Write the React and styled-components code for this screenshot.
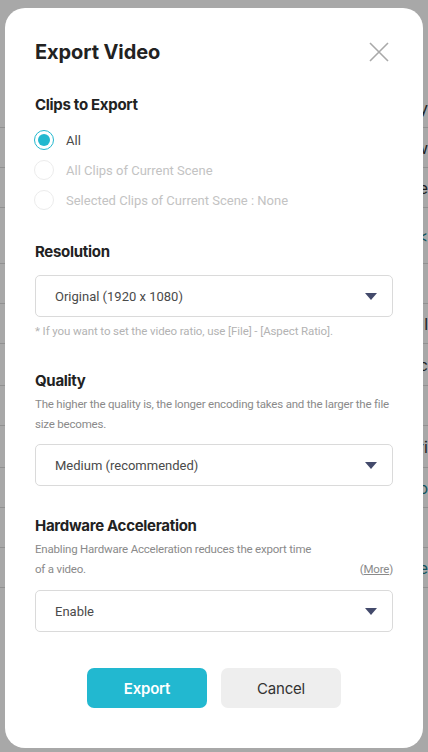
import React, { useState } from "react";
import styled, { createGlobalStyle } from "styled-components";

const GlobalStyle = createGlobalStyle`
  * { box-sizing: border-box; }
  html, body { margin: 0; padding: 0; }
  body {
    font-family: Inter, "Noto Sans", "Liberation Sans", sans-serif;
    background: #ffffff;
  }
`;

const bodyFont = `Roboto, "Noto Sans", "Liberation Sans", sans-serif`;

const backRows = [
  { text: "y", teal: false, h: 40 },
  { text: "w", teal: false, h: 40 },
  { text: "e", teal: false, h: 40 },
  { text: "<", teal: true, h: 56 },
  { text: "", teal: false, h: 40 },
  { text: "l", teal: false, h: 40 },
  { text: "c", teal: false, h: 42 },
  { text: "", teal: false, h: 40 },
  { text: "ri", teal: false, h: 42 },
  { text: "o", teal: true, h: 40 },
  { text: "", teal: false, h: 40 },
  { text: "e", teal: true, h: 40 },
];

function App() {
  const [clips, setClips] = useState("all");

  const clipOptions = [
    { id: "all", label: "All", disabled: false },
    { id: "scene", label: "All Clips of Current Scene", disabled: true },
    { id: "selected", label: "Selected Clips of Current Scene : None", disabled: true },
  ];

  return (
    <Screen>
      <GlobalStyle />
      <BackPage>
        {backRows.map((r, i) => (
          <BackRow key={i} $h={r.h}>
            <BackText $teal={r.teal}>{r.text}</BackText>
          </BackRow>
        ))}
      </BackPage>
      <Backdrop>
        <Modal>
          <Header>
            <Title>Export Video</Title>
            <CloseButton aria-label="Close">
              <svg width="20" height="20" viewBox="0 0 20 20">
                <path d="M1 1 L19 19 M19 1 L1 19" stroke="#a9a9a9" strokeWidth="1.6" fill="none" />
              </svg>
            </CloseButton>
          </Header>

          <Section $top={31}>
            <Label>Clips to Export</Label>
            <RadioList>
              {clipOptions.map((o) => (
                <RadioRow key={o.id} $disabled={o.disabled} onClick={() => !o.disabled && setClips(o.id)}>
                  <RadioCircle $checked={clips === o.id} $disabled={o.disabled} />
                  <RadioText $disabled={o.disabled}>{o.label}</RadioText>
                </RadioRow>
              ))}
            </RadioList>
          </Section>

          <Section $top={27}>
            <Label>Resolution</Label>
            <Select $top={13}>
              <span>Original (1920 x 1080)</span>
              <Arrow />
            </Select>
            <Note>* If you want to set the video ratio, use [File] - [Aspect Ratio].</Note>
          </Section>

          <Section $top={32}>
            <Label>Quality</Label>
            <Desc>The higher the quality is, the longer encoding takes and the larger the file size becomes.</Desc>
            <Select $top={10}>
              <span>Medium (recommended)</span>
              <Arrow />
            </Select>
          </Section>

          <Section $top={30}>
            <Label>Hardware Acceleration</Label>
            <Desc>
              Enabling Hardware Acceleration reduces the export time
              <DescLine>
                <span>of a video.</span>
                <More>
                  (<u>More</u>)
                </More>
              </DescLine>
            </Desc>
            <Select $top={11}>
              <span>Enable</span>
              <Arrow />
            </Select>
          </Section>

          <Buttons>
            <Button $primary>Export</Button>
            <Button>Cancel</Button>
          </Buttons>
        </Modal>
      </Backdrop>
    </Screen>
  );
}

export default App;

const Screen = styled.div`
  position: relative;
  width: 428px;
  height: 752px;
  overflow: hidden;
`;

const BackPage = styled.div`
  display: flex;
  flex-direction: column;
  padding-top: 88px;
`;

const BackRow = styled.div`
  height: ${(p) => p.$h}px;
  display: flex;
  align-items: center;
  justify-content: flex-end;
  border-bottom: 1px solid #dcdcdc;
`;

const BackText = styled.span`
  font-size: 16px;
  color: ${(p) => (p.$teal ? "#1d7f8c" : "#333")};
`;

const Backdrop = styled.div`
  position: absolute;
  inset: 0;
  background: rgba(0, 0, 0, 0.34);
  padding: 8px 5px 4px 5px;
`;

const Modal = styled.div`
  width: 418px;
  height: 740px;
  background: #fff;
  border-radius: 20px;
  padding: 32px 30px 0 30px;
  display: flex;
  flex-direction: column;
`;

const Header = styled.div`
  display: flex;
  align-items: center;
  justify-content: space-between;
  height: 24px;
`;

const Title = styled.h1`
  margin: 0;
  font-size: 20px;
  line-height: 24px;
  font-weight: 700;
  color: #222;
  letter-spacing: -0.1px;
`;

const CloseButton = styled.button`
  border: none;
  background: none;
  padding: 0;
  margin-right: 4px;
  width: 20px;
  height: 20px;
  cursor: pointer;
  display: flex;
`;

const Section = styled.div`
  display: flex;
  flex-direction: column;
  margin-top: ${(p) => p.$top}px;
`;

const Label = styled.div`
  font-size: 15px;
  line-height: 20px;
  font-weight: 700;
  color: #222;
  letter-spacing: -0.3px;
`;

const RadioList = styled.div`
  display: flex;
  flex-direction: column;
  margin-top: 10px;
`;

const RadioRow = styled.div`
  display: flex;
  align-items: center;
  height: 30px;
  cursor: ${(p) => (p.$disabled ? "default" : "pointer")};
`;

const RadioCircle = styled.span`
  width: 20px;
  height: 20px;
  border-radius: 50%;
  border: 1px solid ${(p) => (p.$checked ? "#22b8cf" : "#ececec")};
  display: flex;
  align-items: center;
  justify-content: center;
  margin-left: -1px;
  &::after {
    content: "";
    width: 12px;
    height: 12px;
    border-radius: 50%;
    background: ${(p) => (p.$checked ? "#22b8cf" : "transparent")};
  }
`;

const RadioText = styled.span`
  margin-left: 12px;
  font-family: ${bodyFont};
  font-size: 13px;
  color: ${(p) => (p.$disabled ? "#c3c3c3" : "#4a4a4a")};
`;

const Select = styled.div`
  margin-top: ${(p) => p.$top}px;
  height: 42px;
  border: 1px solid #dadada;
  border-radius: 5px;
  display: flex;
  align-items: center;
  justify-content: space-between;
  padding: 0 15px 0 19px;
  font-family: ${bodyFont};
  font-size: 13px;
  color: #4a4a4a;
`;

const Arrow = styled.span`
  width: 0;
  height: 0;
  border-left: 6px solid transparent;
  border-right: 6px solid transparent;
  border-top: 7px solid #434a6b;
`;

const Note = styled.div`
  margin-top: 6px;
  font-family: ${bodyFont};
  font-size: 11.5px;
  line-height: 16px;
  color: #b3b3b3;
  letter-spacing: -0.1px;
`;

const Desc = styled.div`
  margin-top: 3px;
  font-family: ${bodyFont};
  font-size: 11.5px;
  line-height: 20px;
  color: #8a8a8a;
  letter-spacing: -0.2px;
`;

const DescLine = styled.div`
  display: flex;
  justify-content: space-between;
`;

const More = styled.span`
  color: #8a8a8a;
`;

const Buttons = styled.div`
  display: flex;
  justify-content: center;
  gap: 14px;
  margin-top: 36px;
`;

const Button = styled.button`
  width: 120px;
  height: 40px;
  border: none;
  border-radius: 7px;
  font-family: inherit;
  font-size: 15px;
  font-weight: ${(p) => (p.$primary ? 600 : 400)};
  background: ${(p) => (p.$primary ? "#22b8d0" : "#eeeeee")};
  color: ${(p) => (p.$primary ? "#fff" : "#333")};
  letter-spacing: -0.2px;
  cursor: pointer;
`;
